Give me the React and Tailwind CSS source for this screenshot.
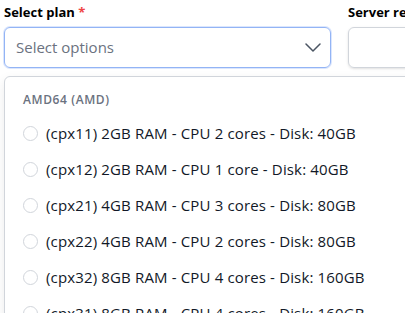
import React from "react";

const options = [
  "(cpx11) 2GB RAM - CPU 2 cores - Disk: 40GB",
  "(cpx12) 2GB RAM - CPU 1 core - Disk: 40GB",
  "(cpx21) 4GB RAM - CPU 3 cores - Disk: 80GB",
  "(cpx22) 4GB RAM - CPU 2 cores - Disk: 80GB",
  "(cpx32) 8GB RAM - CPU 4 cores - Disk: 160GB",
  "(cpx31) 8GB RAM - CPU 4 cores - Disk: 160GB",
];

export default function App() {
  return (
    <div
      className="relative w-[405px] h-[313px] overflow-hidden bg-white text-[#111827]"
      style={{ fontFamily: "'Open Sans', 'Noto Sans', sans-serif" }}
    >
      <div className="flex gap-[17px] pl-[4px] pt-[2px]">
        <div className="w-[327px] shrink-0">
          <div className="text-[13px] leading-[20px] font-bold text-black">
            Select plan <span className="text-[#ef4444]">*</span>
          </div>
          <div className="mt-[5px] h-[41px] rounded-md border border-[#93b4f5] shadow-[0_0_0_1px_#dbe6fd] flex items-center justify-between pl-[11px] pr-[8px]">
            <span className="text-[15px] text-[#6b7280]">Select options</span>
            <svg width="16" height="9" viewBox="0 0 16 9" fill="none" className="mr-[1px]">
              <path d="M1 1l7 7 7-7" stroke="#4b5563" strokeWidth="1.5" strokeLinecap="round" strokeLinejoin="round" />
            </svg>
          </div>
        </div>
        <div className="w-[200px] shrink-0">
          <div className="text-[13px] leading-[20px] font-bold text-black">Server region</div>
          <div className="mt-[5px] h-[41px] rounded-md border border-[#d1d5db] shadow-sm" />
        </div>
      </div>

      <div className="absolute left-[4px] top-[76px] w-[440px] h-[300px] rounded-md border border-[#d1d5db] bg-white shadow-[0_4px_12px_rgba(0,0,0,0.08)]">
        <div className="pl-[18px] pt-[13px] text-[12px] leading-[20px] font-semibold tracking-[0.05em] text-[#6b7280]">
          AMD64 (AMD)
        </div>
        <div className="mt-[5px]">
          {options.map((o) => (
            <div key={o} className="h-[36px] flex items-center pl-[18px]">
              <span className="w-[15px] h-[15px] rounded-full border border-[#d1d5db] bg-white shrink-0" />
              <span className="ml-[8px] text-[15px] tracking-[0.15px] text-[#111827] whitespace-nowrap">{o}</span>
            </div>
          ))}
        </div>
      </div>
    </div>
  );
}
